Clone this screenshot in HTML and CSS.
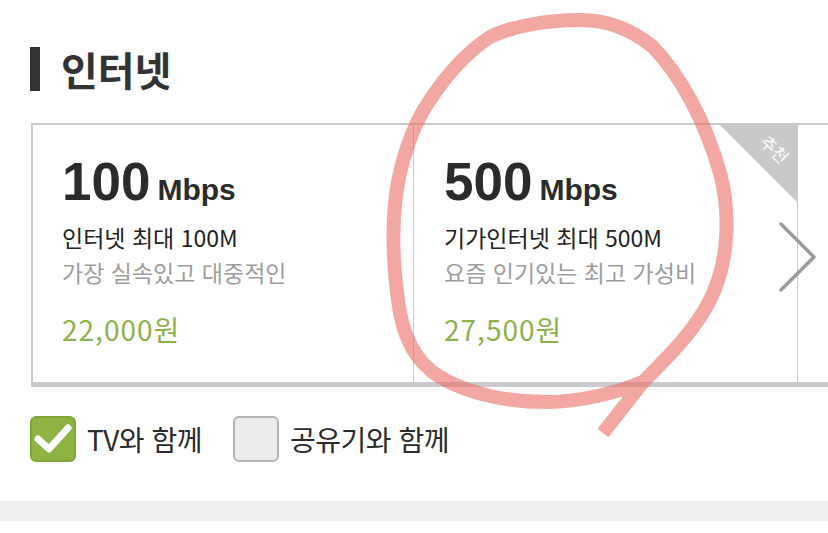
FILE: index.html
```html
<!DOCTYPE html>
<html lang="ko">
<head>
  <meta charset="UTF-8">
  <meta name="viewport" content="width=device-width, initial-scale=1.0">
  <title>인터넷</title>
  <link rel="stylesheet" href="styles.css">
</head>
<body>
  <h1 class="title">인터넷</h1>

  <div class="plans">
    <div class="plan">
      <div class="speed">100<span class="unit">Mbps</span></div>
      <p class="plan-name">인터넷 최대 100M</p>
      <p class="plan-desc">가장 실속있고 대중적인</p>
      <p class="plan-price">22,000원</p>
    </div>
    <div class="plan">
      <div class="badge"><span>추천</span></div>
      <div class="speed">500<span class="unit">Mbps</span></div>
      <p class="plan-name">기가인터넷 최대 500M</p>
      <p class="plan-desc">요즘 인기있는 최고 가성비</p>
      <p class="plan-price">27,500원</p>
    </div>
    <div class="plan"></div>

    <!-- 다음 버튼 -->
    <svg class="next-btn" width="40" height="74" viewBox="0 0 40 74">
      <path d="M3 4 L36 37 L3 70" fill="none" stroke="#9b9b9b" stroke-width="3.5" stroke-linecap="round" stroke-linejoin="round"/>
    </svg>
  </div>

  <div class="options">
    <label class="option">
      <span class="check checked">
        <svg width="46" height="46" viewBox="0 0 46 46">
          <path d="M8 23 L19 33 L38 12" fill="none" stroke="#fff" stroke-width="7" stroke-linecap="round" stroke-linejoin="round"/>
        </svg>
      </span>
      TV와 함께
    </label>
    <label class="option">
      <span class="check"></span>
      공유기와 함께
    </label>
  </div>

  <div class="divider"></div>

  <!-- 손으로 그린 표시 -->
  <svg class="scribble" width="828" height="533" viewBox="0 0 828 533">
    <path d="M642 382 C620 392 580 402 547 402 C510 402 470 395 440 377 C415 362 402 335 398 300 C393 265 392 225 396 195 C400 165 412 125 430 100 C450 70 470 50 490 37 C510 27 545 20 580 20 C610 20 635 32 653 47 C680 75 705 120 720 173 C730 210 730 260 710 300 C695 330 670 355 643 382 L603 433"
      fill="none" stroke="#e8675f" stroke-opacity="0.58" stroke-width="14" stroke-linejoin="round"/>
  </svg>
</body>
</html>
```

FILE: styles.css
```css
body {
  margin: 0;
  background: #fff;
  font-family: "Noto Sans CJK KR", sans-serif;
  color: #222;
}

.title {
  display: flex;
  align-items: center;
  gap: 21px;
  margin: 0 0 0 30px;
  padding-top: 47px;
  height: 44px;
  font-size: 40px;
  line-height: 44px;
  font-weight: bold;
  color: #333;
}
.title:before {
  content: "";
  width: 10px;
  height: 44px;
  background: #333;
}

.plans {
  position: relative;
  display: flex;
  margin: 32px 0 0 31px;
  border-top: 2px solid #cacaca;
  border-left: 2px solid #cacaca;
  border-bottom: 5px solid #cacaca;
  overflow: hidden;
}

.plan {
  position: relative;
  flex: 0 0 384px;
  box-sizing: border-box;
  padding: 27px 0 35px 30px;
  border-left: 1px solid #cacaca;
}
.plan:first-child {
  flex-basis: 380px;
  border-left: none;
  padding-left: 29px;
}

.speed {
  height: 60px;
  font-family: "Liberation Sans", "Noto Sans CJK KR", sans-serif;
  font-size: 53px;
  line-height: 60px;
  font-weight: bold;
  color: #2b2b2b;
}
.unit {
  margin-left: 7px;
  font-size: 30px;
  line-height: 1;
}

.plan p {
  margin: 0;
}
.plan-name {
  margin-top: 8px !important;
  font-size: 23px;
  line-height: 35px;
  color: #222;
}
.plan-desc {
  font-size: 23px;
  line-height: 35px;
  color: #9d9d9d;
}
.plan-price {
  margin-top: 21px !important;
  font-size: 28px;
  line-height: 36px;
  letter-spacing: 1px;
  color: #8db14c;
}

.badge {
  position: absolute;
  top: 0;
  right: 0;
  width: 77px;
  height: 77px;
  background: #c9c9c9;
  clip-path: polygon(0 0, 100% 0, 100% 100%);
}
.badge span {
  position: absolute;
  left: 37px;
  top: 14px;
  width: 36px;
  font-size: 17px;
  line-height: 20px;
  text-align: center;
  color: #fff;
  transform: rotate(45deg);
}

.next-btn {
  position: absolute;
  left: 745px;
  top: 95px;
}

.options {
  display: flex;
  align-items: center;
  gap: 31px;
  margin: 29px 0 0 30px;
}
.option {
  display: flex;
  align-items: center;
  gap: 11px;
  font-size: 28px;
  line-height: 46px;
  letter-spacing: -0.5px;
  color: #2b2b2b;
}
.check {
  display: block;
  width: 46px;
  height: 46px;
  box-sizing: border-box;
  border: 2px solid #b3b3b3;
  border-radius: 6px;
  background: #ececec;
}
.check.checked {
  border-color: #80a63a;
  background: #8db342;
}
.check svg {
  display: block;
  margin: -2px;
}

.divider {
  height: 20px;
  margin-top: 39px;
  background: #efefef;
}

.scribble {
  position: absolute;
  top: 0;
  left: 0;
  pointer-events: none;
}
```
